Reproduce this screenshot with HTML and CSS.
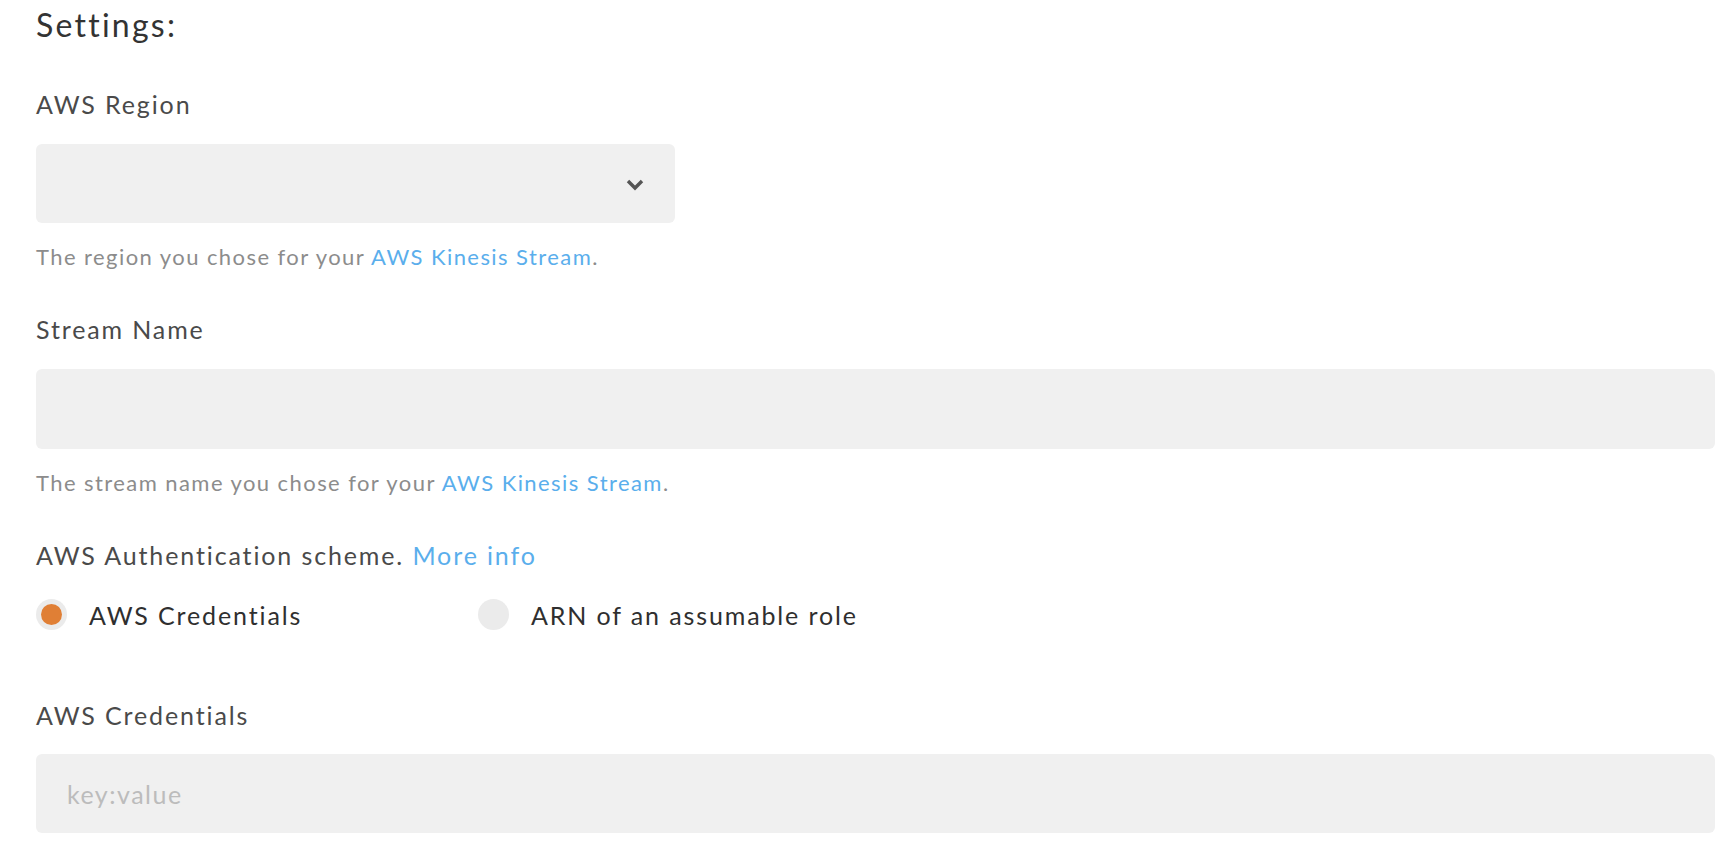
FILE: index.html
```html
<!DOCTYPE html>
<html>
<head>
<meta charset="utf-8">
<link rel="stylesheet" href="styles.css">
</head>
<body>
<div class="page">
  <h2 class="title">Settings:</h2>

  <div class="field">
    <div class="label">AWS Region</div>
    <div class="select">
      <svg class="chev" width="18" height="12" viewBox="0 0 18 12"><path d="M2 2 L9 9 L16 2" fill="none" stroke="#555" stroke-width="3.4"/></svg>
    </div>
    <div class="help">The region you chose for your <a class="link">AWS Kinesis Stream</a>.</div>
  </div>

  <div class="field">
    <div class="label">Stream Name</div>
    <div class="input"></div>
    <div class="help">The stream name you chose for your <a class="link">AWS Kinesis Stream</a>.</div>
  </div>

  <div class="field">
    <div class="label">AWS Authentication scheme. <a class="link">More info</a></div>
    <div class="radios">
      <div class="radio radio-first"><span class="dot checked"></span><span class="rlabel">AWS Credentials</span></div>
      <div class="radio"><span class="dot"></span><span class="rlabel">ARN of an assumable role</span></div>
    </div>
  </div>

  <div class="field field-last">
    <div class="label">AWS Credentials</div>
    <div class="input"><span class="placeholder">key:value</span></div>
  </div>
</div>
</body>
</html>
```

FILE: styles.css
```css
html, body {
  margin: 0;
  padding: 0;
  background: #fff;
}
body {
  font-family: Lato, "Open Sans", sans-serif;
}
.page {
  padding: 5px 9px 0 36px;
}
.title {
  margin: 0;
  font-size: 32px;
  line-height: 40px;
  font-weight: 400;
  letter-spacing: 0.07em;
  color: #333;
}
.field {
  margin-top: 44px;
}
.field + .field {
  margin-top: 42px;
}
.label {
  font-size: 25px;
  line-height: 30px;
  letter-spacing: 0.075em;
  color: #4a4a4a;
}
.select {
  margin-top: 25px;
  width: 639px;
  height: 79px;
  background: #f0f0f0;
  border-radius: 6px;
  display: flex;
  align-items: center;
  justify-content: flex-end;
  padding-right: 31px;
  box-sizing: border-box;
}
.chev {
  display: block;
  margin-top: 2px;
}
.input {
  margin-top: 25px;
  height: 80px;
  background: #f0f0f0;
  border-radius: 6px;
  display: flex;
  align-items: center;
  padding-left: 31px;
}
.placeholder {
  font-size: 25px;
  letter-spacing: 0.06em;
  color: #bcbcbc;
}
.help {
  margin-top: 19px;
  font-size: 22px;
  line-height: 30px;
  letter-spacing: 0.065em;
  color: #8c8c8c;
}
.link {
  color: #5aaeec;
  text-decoration: none;
}
.radios {
  margin-top: 29px;
  display: flex;
  align-items: center;
}
.radio {
  display: flex;
  align-items: center;
  gap: 22px;
}
.radio-first {
  width: 442px;
}
.dot {
  width: 31px;
  height: 31px;
  border-radius: 50%;
  background: #ebebeb;
  display: flex;
  align-items: center;
  justify-content: center;
}
.dot.checked::after {
  content: "";
  width: 21px;
  height: 21px;
  border-radius: 50%;
  background: #e07f35;
}
.rlabel {
  font-size: 25px;
  line-height: 30px;
  letter-spacing: 0.075em;
  color: #2f2f2f;
}
.field-last {
  margin-top: 70px !important;
}
.field-last .input {
  margin-top: 24px;
  height: 79px;
}
```
